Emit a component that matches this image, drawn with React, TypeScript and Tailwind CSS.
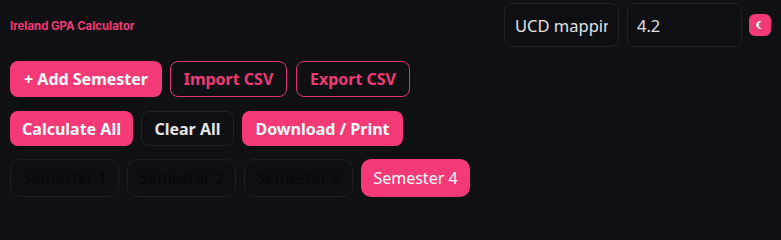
import { useState } from "react";

const semesters = ["Semester 1", "Semester 2", "Semester 3", "Semester 4"];

function MoonIcon() {
  return (
    <svg width="10" height="10" viewBox="0 0 10 10" aria-hidden="true">
      <path d="M7.05 1.8 A3.8 3.8 0 1 0 7.05 8.2 A3.2 3.2 0 0 1 7.05 1.8 Z" fill="#ffffff" />
    </svg>
  );
}

export default function App() {
  const [active, setActive] = useState(3);

  return (
    <div
      className="min-h-screen w-full bg-[#0f1014] px-2.5 pt-[3px] text-[#e5e5e5]"
      style={{ fontFamily: '"Noto Sans", "Open Sans", sans-serif' }}
    >
      {/* Header */}
      <div className="flex h-[44px] items-center justify-between">
        <h1
          className="pt-[3px] text-[11.4px] font-bold text-[#f23a75]"
          style={{ fontFamily: 'Inter, "Noto Sans", sans-serif' }}
        >
          Ireland GPA Calculator
        </h1>
        <div className="flex items-center gap-2">
          <input
            readOnly
            value="UCD mapping"
            className="h-[44px] w-[115px] rounded-lg border border-[#1f2126] bg-[#0e0f13] px-[10px] text-[16.5px] text-[#e2e2e2] outline-none"
          />
          <input
            readOnly
            value="4.2"
            className="h-[44px] w-[115px] rounded-lg border border-[#1f2126] bg-[#0e0f13] px-[9px] text-[16.5px] text-[#e2e2e2] outline-none"
          />
          <button className="ml-[-1px] flex h-[22px] w-[22px] items-center justify-center rounded-md bg-[#f43a76]">
            <MoonIcon />
          </button>
        </div>
      </div>

      {/* Row 1 */}
      <div className="mt-[14px] flex gap-2">
        <button className="h-9 w-[152px] rounded-lg bg-[#f43a76] text-[16px] font-bold text-white">
          + Add Semester
        </button>
        <button className="h-9 w-[117px] rounded-lg border border-[#e23570] text-[16px] font-bold text-[#f03a74]">
          Import CSV
        </button>
        <button className="ml-px h-9 w-[114px] rounded-lg border border-[#e23570] text-[16px] font-bold text-[#f03a74]">
          Export CSV
        </button>
      </div>

      {/* Row 2 */}
      <div className="mt-[14px] flex gap-2">
        <button className="h-[35px] w-[123px] rounded-lg bg-[#f43a76] text-[16px] font-bold text-white">
          Calculate All
        </button>
        <button className="h-[35px] w-[93px] rounded-lg border border-[#202227] bg-[#0e0f13] text-[16px] font-bold text-[#e4e4e4]">
          Clear All
        </button>
        <button className="h-[35px] w-[161px] rounded-lg bg-[#f43a76] text-[16px] font-bold text-white">
          Download / Print
        </button>
      </div>

      {/* Semester tabs */}
      <div className="mt-[13px] flex gap-2">
        {semesters.map((s, i) =>
          i === active ? (
            <button
              key={s}
              onClick={() => setActive(i)}
              className="h-[38px] w-[109px] rounded-[10px] bg-[#f43a76] text-[16px] text-white"
            >
              {s}
            </button>
          ) : (
            <button
              key={s}
              onClick={() => setActive(i)}
              className="h-[38px] w-[109px] rounded-[10px] border border-[#1c1e23] bg-[#0e0f13] text-[16px] text-[#060709]"
            >
              {s}
            </button>
          )
        )}
      </div>
    </div>
  );
}
